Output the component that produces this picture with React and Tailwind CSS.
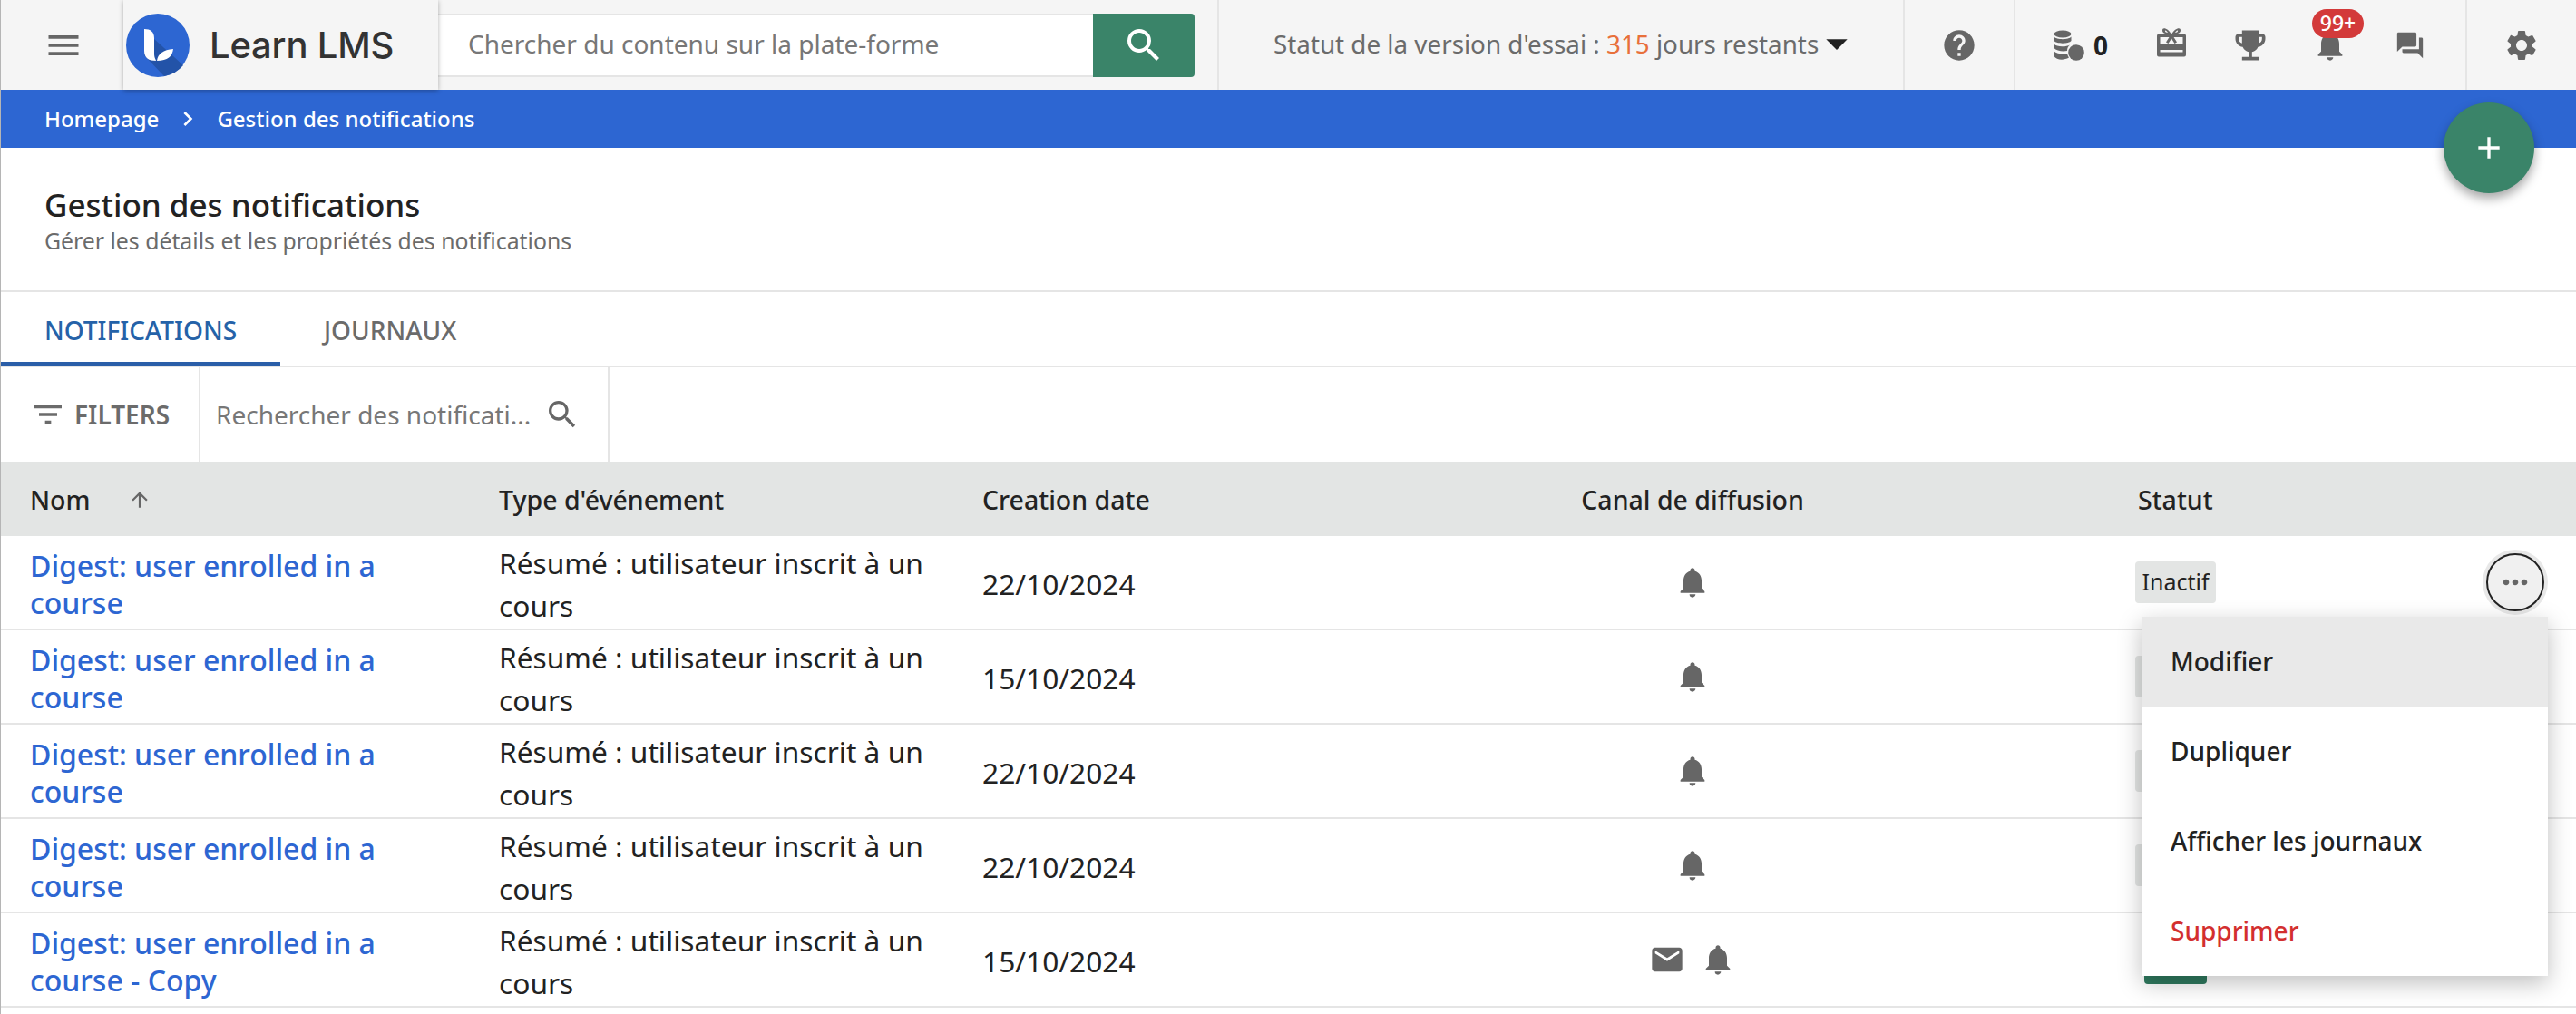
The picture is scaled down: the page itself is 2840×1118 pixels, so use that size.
import { MdMenu, MdSearch, MdHelp, MdEmojiEvents, MdNotifications, MdQuestionAnswer, MdSettings, MdFilterList, MdEmail, MdArrowUpward, MdMoreHoriz, MdAdd, MdChevronRight, MdArrowDropDown } from "react-icons/md";

const ROWS = [
  { name: "Digest: user enrolled in a course", date: "22/10/2024", mail: false },
  { name: "Digest: user enrolled in a course", date: "15/10/2024", mail: false },
  { name: "Digest: user enrolled in a course", date: "22/10/2024", mail: false },
  { name: "Digest: user enrolled in a course", date: "22/10/2024", mail: false },
  { name: "Digest: user enrolled in a course - Copy", date: "15/10/2024", mail: true },
];

function Logo() {
  return (
    <svg viewBox="0 0 70 70" className="h-[70px] w-[70px] shrink-0">
      <circle cx="35" cy="35" r="35" fill="#2d66d2" />
      <path d="M20 18 L63 57 A35 35 0 0 1 42 69 L20 46 Z" fill="#2353a8" />
      <path d="M20 17 C27 17 31 20 31 27 V44 C31 49 33 51 33 52 C25 52 20 49 20 41 Z" fill="#fff" />
      <path d="M34 52 C35 44 41 40 52 39 C51 47 46 52 34 52 Z" fill="#fff" />
    </svg>
  );
}

function CoinsIcon() {
  return (
    <svg viewBox="0 0 34 34" className="h-[34px] w-[34px]" fill="#666">
      <ellipse cx="10" cy="4.5" rx="9.5" ry="4" />
      <path d="M0.5 7.5 C3 11 17 11 19.5 7.5 V12 C17 15.5 3 15.5 0.5 12 Z" />
      <path d="M0.5 15.5 C3 19 14 19 18 16.5 C16 18 15 20 15 23 C10 24 3 23 0.5 20 Z" />
      <path d="M0.5 23.5 C3 26 10 27 15 26 C15.5 28 16 29 17 30.5 C11 34 3 33 0.5 29 Z" />
      <circle cx="25" cy="25" r="8.8" />
    </svg>
  );
}

function GiftIcon() {
  return (
    <svg viewBox="0 0 40 40" className="h-10 w-10" fill="#666">
      <path fillRule="evenodd" d="M7 7.5 H35 A2 2 0 0 1 37 9.5 V30.5 A2 2 0 0 1 35 32.5 H7 A2 2 0 0 1 5 30.5 V9.5 A2 2 0 0 1 7 7.5 Z M8.5 11 V19 H33.5 V11 Z M8.5 25 V27.5 H33.5 V25 Z" />
      <path d="M21 7 L15 16.5 L17.5 18 L21 12.5 L24.5 18 L27 16.5 Z" />
      <path fillRule="evenodd" d="M21 8 C18 2 11 -1 11 3.5 C11 7 16 8 21 8 Z M14 3.5 C15.5 3.5 16.5 5 17 6 C15 6 13.5 5 14 3.5 Z" />
      <path fillRule="evenodd" d="M21 8 C24 2 31 -1 31 3.5 C31 7 26 8 21 8 Z M28 3.5 C26.5 3.5 25.5 5 25 6 C27 6 28.500 5 28 3.5 Z" />
    </svg>
  );
}

function Cell({ children, className }) {
  return <div className={`flex items-center ${className}`}>{children}</div>;
}

function ActionMenu() {
  return (
    <div className="absolute left-[7px] top-[89px] z-10 w-[448px] bg-white text-[28px] font-medium text-[#222] shadow-[0_8px_24px_rgba(0,0,0,0.25)]">
      <div className="flex h-[99px] items-center bg-[#e9e9e9] pb-[2px] pl-8">Modifier</div>
      <div className="flex h-[99px] items-center pb-[2px] pl-8">Dupliquer</div>
      <div className="flex h-[99px] items-center pb-[2px] pl-8">Afficher les journaux</div>
      <div className="flex h-[99px] items-center pb-[2px] pl-8 text-[#d32f2f]">Supprimer</div>
    </div>
  );
}

export default function App() {
  return (
    <div className="relative h-[1118px] w-[2840px] overflow-hidden border-l border-[#b5b5b5] bg-white font-['Noto_Sans',sans-serif] text-[#222]">
      <header className="flex h-[99px] bg-[#f5f5f5]">
        <div className="flex w-[135px] items-center pl-[47px]">
          <MdMenu className="h-11 w-11 text-[#666]" />
        </div>
        <div className="z-10 flex w-[347px] items-center gap-[22px] pl-[3px] shadow-[0_1px_5px_rgba(0,0,0,0.3)]">
          <Logo />
          <span className="font-['Inter',sans-serif] text-[40px] font-medium tracking-[-0.2px] text-[#333]">Learn LMS</span>
        </div>
        <div className="flex w-[859px] items-center">
          <div className="flex h-[70px] w-[722px] items-center border-y-2 border-[#e5e5e5] bg-white pb-[4px] pl-[33px] text-[28px] text-[#777]">
            Chercher du contenu sur la plate-forme
          </div>
          <button type="button" className="flex h-[70px] w-[112px] items-center justify-center rounded-r bg-[#3a8469]">
            <MdSearch className="h-12 w-12 text-white" />
          </button>
        </div>
        <div className="flex w-[756px] items-center border-l-2 border-[#e5e5e5] pl-[60px] text-[27.8px] text-[#6b6b6b]">
          <span className="pb-[2px]">
            Statut de la version d'essai : <span className="text-[#e8703a]">315</span> jours restants
          </span>
          <MdArrowDropDown className="mb-[4px] ml-[-8px] h-14 w-14 text-[#222]" />
        </div>
        <div className="flex w-[122px] items-center justify-center border-l-2 border-[#e5e5e5]">
          <MdHelp className="h-10 w-10 text-[#666]" />
        </div>
        <div className="flex w-[498px] items-center gap-[46px] border-l-2 border-[#e5e5e5] pl-[42px]">
          <div className="flex items-center gap-[10px]">
            <CoinsIcon />
            <span className="text-[28px] font-bold text-[#222]">0</span>
          </div>
          <div className="ml-[3px]">
            <GiftIcon />
          </div>
          <MdEmojiEvents className="h-11 w-11 text-[#666]" />
          <div className="relative">
            <MdNotifications className="h-10 w-10 text-[#666]" />
            <span className="absolute left-0 top-[-20px] flex h-8 w-[57px] items-center justify-center rounded-[16px] bg-[#d33a3a] text-[23px] font-medium text-white">99+</span>
          </div>
          <MdQuestionAnswer className="ml-[5px] h-[34px] w-[34px] text-[#666]" />
        </div>
        <div className="flex flex-1 items-center justify-center border-l-2 border-[#e5e5e5]">
          <MdSettings className="h-10 w-10 text-[#666]" />
        </div>
      </header>

      <nav className="flex h-[64px] items-center bg-[#2d66d2] pl-[48px] text-[24px] font-medium text-white">
        <span>Homepage</span>
        <MdChevronRight className="mx-[16px] h-8 w-8" />
        <span>Gestion des notifications</span>
      </nav>

      <button type="button" className="absolute left-[2693px] top-[113px] z-20 flex h-[100px] w-[100px] items-center justify-center rounded-full bg-[#3a8469] shadow-[0_6px_12px_rgba(0,0,0,0.35)]">
        <MdAdd className="h-10 w-10 text-white" />
      </button>

      <div className="h-[159px] border-b-2 border-[#e5e5e5] pl-[48px] pt-[40px]">
        <h1 className="text-[35px] font-medium leading-[46px]">Gestion des notifications</h1>
        <p className="text-[24.8px] leading-[33px] text-[#6b6b6b]">Gérer les détails et les propriétés des notifications</p>
      </div>

      <div className="flex h-[83px] border-b-2 border-[#e5e5e5] text-[28px] font-medium">
        <div className="flex w-[308px] items-center border-b-4 border-[#2a5ea8] pl-[48px] pt-[6px] text-[#2562a8]">NOTIFICATIONS</div>
        <div className="flex items-center pl-[48px] pt-[2px] text-[#6b6b6b]">JOURNAUX</div>
      </div>

      <div className="flex h-[104px]">
        <div className="flex w-[220px] items-center gap-[9px] border-r-2 border-[#e5e5e5] pl-[32px] text-[28px] font-semibold text-[#6b6b6b]">
          <MdFilterList className="h-10 w-10" />
          FILTERS
        </div>
        <div className="flex w-[451px] items-center border-r-2 border-[#e5e5e5] pl-[17px] text-[28px] text-[#777]">
          <span>Rechercher des notificati...</span>
          <MdSearch className="ml-[15px] h-10 w-10 text-[#666]" />
        </div>
      </div>

      <div className="grid h-[82px] grid-cols-[549px_533px_295px_976px_1fr] items-center bg-[#e3e5e4] pt-[2px] text-[28.5px] font-medium">
        <div className="flex items-center pl-[32px]">
          Nom
          <MdArrowUpward className="ml-[41px] h-[26px] w-[26px] text-[#666]" />
        </div>
        <div>Type d'événement</div>
        <div>Creation date</div>
        <div className="text-center">Canal de diffusion</div>
        <div className="pl-[3px]">Statut</div>
      </div>

      {ROWS.map((row, i) => (
        <div key={i} className="grid h-[104px] grid-cols-[549px_533px_295px_976px_1fr] border-b-2 border-[#e5e5e5]">
          <Cell className="pl-[32px] pr-[90px] pt-[4px] text-[32px] font-medium leading-[41px] text-[#2d66d2]">{row.name}</Cell>
          <Cell className="pr-[30px] pt-[4px] text-[31.7px] leading-[47px]">Résumé : utilisateur inscrit à un cours</Cell>
          <Cell className="pt-[4px] text-[31.7px]">{row.date}</Cell>
          <Cell className="justify-center gap-[16px] text-[#666]">
            {row.mail && <MdEmail className="h-10 w-10" />}
            <MdNotifications className="h-10 w-10" />
          </Cell>
          <Cell className="relative justify-between pr-[35px]">
            {i === 0 && (
              <>
                <span className="flex h-[46px] w-[89px] items-center justify-center rounded bg-[#e3e5e4] text-[25px]">Inactif</span>
                <button type="button" className="flex h-[64px] w-[64px] items-center justify-center rounded-full border-2 border-[#222] bg-[#f0f0f0] shadow-[0_0_0_4px_#e8e8e8]">
                  <MdMoreHoriz className="h-10 w-10 text-[#666]" />
                </button>
                <ActionMenu />
              </>
            )}
            {i > 0 && i < 4 && <span className="h-[46px] w-[89px] rounded bg-[#e3e5e4]" />}
            {i === 4 && <span className="ml-[10px] mt-[6px] h-[47px] w-[69px] rounded bg-[#2f7a5f]" />}
          </Cell>
        </div>
      ))}
    </div>
  );
}
